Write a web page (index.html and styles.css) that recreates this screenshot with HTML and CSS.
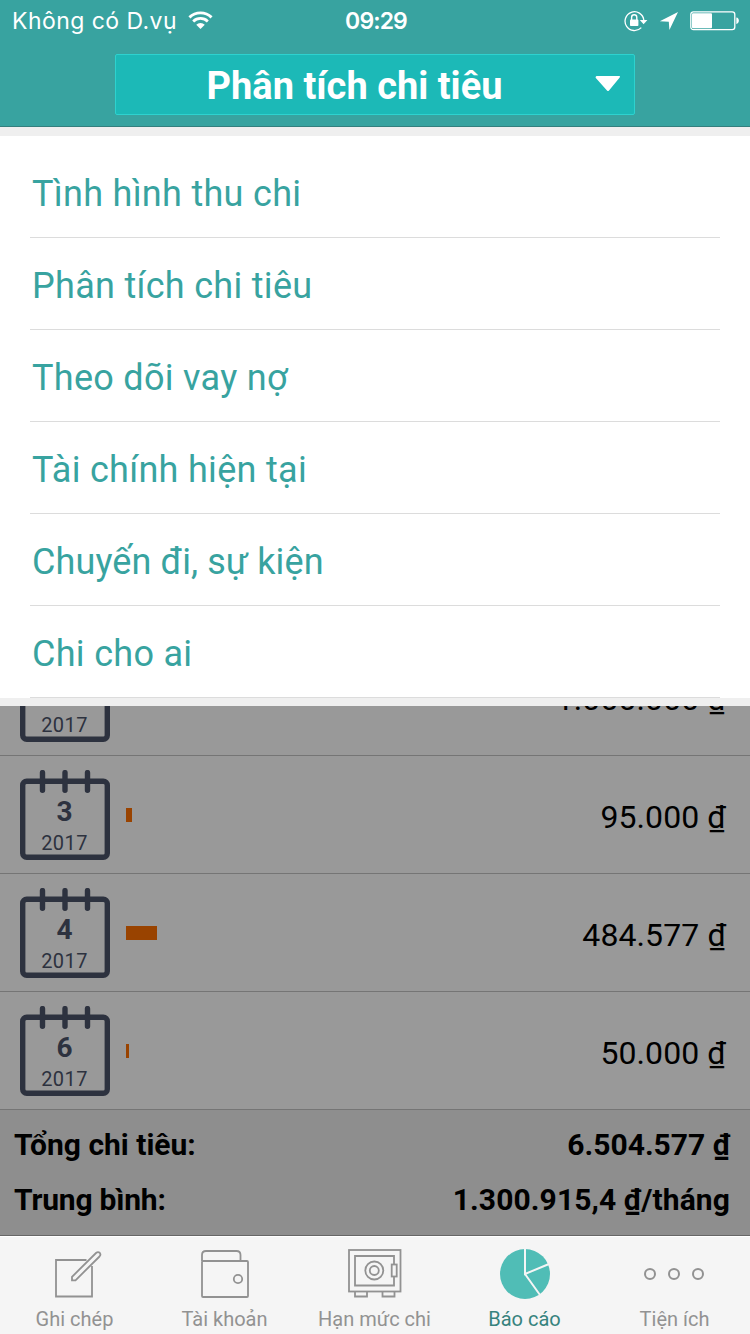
FILE: index.html
```
<!DOCTYPE html>
<html lang="vi">
<head>
    <meta charset="UTF-8">
    <meta name="viewport" content="width=device-width, initial-scale=1.0">
    <title>Phân tích chi tiêu</title>
    <link rel="stylesheet" href="styles.css">
</head>
<body>
    <!-- Header -->
    <header>
        <div class="status-bar">
            <div class="carrier">
                <span class="carrier-name">Không có D.vụ</span>
                <svg class="wifi" width="25" height="20" viewBox="0 0 26 20">
                    <path d="M1.5 6.2a16.5 16.5 0 0 1 23 0" fill="none" stroke="#fff" stroke-width="3"/>
                    <path d="M5.4 10.4a11 11 0 0 1 15.2 0" fill="none" stroke="#fff" stroke-width="2.9"/>
                    <path d="M8.6 13.8a6.4 6.4 0 0 1 8.8 0L13 18.4z" fill="#fff"/>
                </svg>
            </div>
            <span class="time">09:29</span>
            <div class="status-icons">
                <svg width="24" height="22" viewBox="0 0 24 22">
                    <path d="M17.3 17.6A9.4 9.4 0 1 1 19.8 10" fill="none" stroke="#fff" stroke-width="1.3"/>
                    <path d="M15.8 10h7.6l-3.8 4.2z" fill="#fff"/>
                    <rect x="6" y="9.6" width="8.4" height="6.4" rx=".8" fill="#fff"/>
                    <path d="M7.6 10V7.4a2.6 2.6 0 0 1 5.2 0V10" fill="none" stroke="#fff" stroke-width="1.4"/>
                </svg>
                <svg width="20" height="20" viewBox="0 0 20 20">
                    <path d="M19 1L.8 10.2l9 .6.6 8.2z" fill="#fff"/>
                </svg>
                <svg width="50" height="20" viewBox="0 0 50 20">
                    <rect x=".8" y=".8" width="44" height="17.8" rx="2.6" fill="none" stroke="#fff" stroke-width="1.3"/>
                    <rect x="2" y="2.2" width="20" height="15" rx="1" fill="#fff"/>
                    <path d="M46.3 6.6c3.4.4 3.4 6 0 6.4z" fill="#fff"/>
                </svg>
            </div>
        </div>
        <button class="report-select">
            <span>Phân tích chi tiêu</span>
            <svg class="arrow" width="26" height="16" viewBox="0 0 26 16">
                <path d="M1.5 0h23q1.2.6 0 1.8L14 14.4q-1 1.2-2 0L.6 1.8Q.4.4 1.5 0z" fill="#fff"/>
            </svg>
        </button>
    </header>

    <main>
        <!-- Report -->
        <section class="report">
            <div class="row">
                <div class="calendar">
                    <svg width="90" height="90" viewBox="0 0 90 90"><use href="#calendarFrame"/></svg>
                    <b>2</b>
                    <span>2017</span>
                </div>
                <span class="amount">1.000.000 ₫</span>
            </div>
            <div class="row">
                <div class="calendar">
                    <svg width="90" height="90" viewBox="0 0 90 90">
                        <g id="calendarFrame" fill="none" stroke="#2d323f">
                            <rect x="2.7" y="11.2" width="84.6" height="76.1" rx="4" stroke-width="5.4"/>
                            <path d="M22.5 2.6v17.6M45 2.6v17.6M67.5 2.6v17.6" stroke-width="5.4" stroke-linecap="round"/>
                        </g>
                    </svg>
                    <b>3</b>
                    <span>2017</span>
                </div>
                <div class="bar" style="width: 6px"></div>
                <span class="amount">95.000 ₫</span>
            </div>
            <div class="row">
                <div class="calendar">
                    <svg width="90" height="90" viewBox="0 0 90 90"><use href="#calendarFrame"/></svg>
                    <b>4</b>
                    <span>2017</span>
                </div>
                <div class="bar" style="width: 31px"></div>
                <span class="amount">484.577 ₫</span>
            </div>
            <div class="row">
                <div class="calendar">
                    <svg width="90" height="90" viewBox="0 0 90 90"><use href="#calendarFrame"/></svg>
                    <b>6</b>
                    <span>2017</span>
                </div>
                <div class="bar" style="width: 3px"></div>
                <span class="amount">50.000 ₫</span>
            </div>
            <div class="summary">
                <div class="summary-line"><span>Tổng chi tiêu:</span><span>6.504.577 ₫</span></div>
                <div class="summary-line"><span class="label-average">Trung bình:</span><span class="average">1.300.915,4 ₫/tháng</span></div>
            </div>
        </section>

        <!-- Dropdown menu -->
        <nav class="menu">
            <ul>
                <li>Tình hình thu chi</li>
                <li>Phân tích chi tiêu</li>
                <li>Theo dõi vay nợ</li>
                <li>Tài chính hiện tại</li>
                <li class="narrow">Chuyến đi, sự kiện</li>
                <li>Chi cho ai</li>
            </ul>
        </nav>
    </main>

    <!-- Tab bar -->
    <footer>
        <a class="tab">
            <svg width="60" height="56" viewBox="0 0 60 56" fill="none" stroke="#929292" stroke-width="1.8">
                <path d="M41.500 13H11v36.500h36V19"/>
                <path d="M27 33.300v-3.500L51 6q2-1.600 3.700-.2 1.500 1.900-.2 3.700L30.500 33.300z"/>
            </svg>
            <span>Ghi chép</span>
        </a>
        <a class="tab">
            <svg width="60" height="56" viewBox="0 0 60 56" fill="none" stroke="#929292" stroke-width="1.8">
                <path d="M7 14V8q0-4 4-4h30.500q4 0 4 4v6"/>
                <rect x="7" y="14" width="46" height="36" rx="1"/>
                <circle cx="43" cy="32" r="4.200"/>
            </svg>
            <span>Tài khoản</span>
        </a>
        <a class="tab">
            <svg width="60" height="56" viewBox="0 0 60 56" fill="none" stroke="#929292" stroke-width="1.8">
                <rect x="4" y="3" width="51.500" height="41.500"/>
                <path d="M49 17V9H10v29.500h39V30"/>
                <rect x="46.700" y="17.500" width="5" height="12"/>
                <circle cx="29.300" cy="23.500" r="9"/>
                <circle cx="29.300" cy="23.500" r="4.500"/>
                <path d="M10 44.500v5h12v-5M37.500 44.500v5h12v-5"/>
            </svg>
            <span>Hạn mức chi</span>
        </a>
        <a class="tab active">
            <svg width="60" height="56" viewBox="0 0 60 56">
                <circle cx="30" cy="27" r="25" fill="#50bdb6"/>
                <path d="M30 1v26l24-10M30 27l15 21" fill="none" stroke="#f5f5f5" stroke-width="2"/>
            </svg>
            <span>Báo cáo</span>
        </a>
        <a class="tab">
            <svg width="64" height="56" viewBox="0 0 64 56" fill="none" stroke="#929292" stroke-width="2">
                <circle cx="7" cy="27" r="5"/>
                <circle cx="31" cy="27" r="5"/>
                <circle cx="55" cy="27" r="5"/>
            </svg>
            <span>Tiện ích</span>
        </a>
    </footer>
</body>
</html>
```
FILE: styles.css
```
/* General Styles */
* {
    box-sizing: border-box;
}

body {
    font-family: Roboto, sans-serif;
    margin: 0;
    width: 750px;
    height: 1334px;
    display: flex;
    flex-direction: column;
    overflow: hidden;
}

svg {
    display: block;
    flex-shrink: 0;
}

/* Header */
header {
    height: 127px;
    background: #38a3a0;
    border-bottom: 1px solid #347f7e;
    color: #fff;
    display: flex;
    flex-direction: column;
    align-items: center;
}

.status-bar {
    width: 100%;
    height: 40px;
    margin-bottom: 14px;
    padding: 1px 10px 0 12px;
    display: grid;
    grid-template-columns: 1fr auto 1fr;
    align-items: center;
}

.carrier {
    display: flex;
    align-items: center;
    gap: 11px;
}

.carrier-name {
    font-family: Inter, sans-serif;
    font-size: 23px;
    line-height: 28px;
    padding-top: 1px;
    letter-spacing: 0.45px;
}

.time {
    font-family: Inter, sans-serif;
    font-size: 23px;
    font-weight: 600;
    line-height: 28px;
    letter-spacing: -0.9px;
}

.status-icons {
    display: flex;
    align-items: center;
    justify-content: flex-end;
    gap: 11px;
}

.report-select {
    position: relative;
    width: 520px;
    height: 61px;
    padding: 2px 41px 0 0;
    background: #1cb9b7;
    border: 1px solid #2dd2cf;
    border-radius: 2px;
    color: #fff;
    font-family: inherit;
    font-size: 38px;
    font-weight: 700;
}

.arrow {
    position: absolute;
    top: 21px;
    right: 13px;
}

/* Report */
main {
    position: relative;
    height: 1109px;
    border-bottom: 1px solid #666;
    background: #999;
    overflow: hidden;
}

.report {
    height: 100%;
    display: flex;
    flex-direction: column;
    justify-content: flex-end;
}

.row {
    height: 118px;
    flex-shrink: 0;
    padding: 0 24px 0 20px;
    border-bottom: 1px solid #757575;
    display: flex;
    align-items: center;
    gap: 16px;
}

.calendar {
    position: relative;
    width: 90px;
    height: 90px;
    padding: 25px 1px 0 0;
    color: #2d323f;
    text-align: center;
}

.calendar svg {
    position: absolute;
    top: 0;
    left: 0;
}

.calendar b {
    display: block;
    font-size: 28px;
    line-height: 33px;
}

.calendar span {
    display: block;
    font-size: 20px;
    line-height: 30px;
    letter-spacing: 0.4px;
}

.bar {
    height: 14px;
    background: #994300;
}

.amount {
    margin-left: auto;
    padding-top: 4px;
    font-size: 32px;
    letter-spacing: 0.1px;
}

.summary {
    height: 125px;
    flex-shrink: 0;
    padding: 7px 20px 8px 14px;
    background: #8e8e8e;
    font-size: 30px;
    font-weight: 700;
}

.summary-line {
    height: 55px;
    line-height: 55px;
    display: flex;
    justify-content: space-between;
}

.label-average {
    letter-spacing: -0.2px;
}

.average {
    letter-spacing: 0.1px;
}

/* Dropdown menu */
.menu {
    position: absolute;
    top: 0;
    left: 0;
    width: 100%;
    height: 579px;
    border-top: 9px solid #efefef;
    border-bottom: 8px solid #efefef;
    background: #fff;
}

.menu ul {
    list-style: none;
    margin: 0;
    padding: 10px 30px 0;
}

.menu li {
    height: 92px;
    padding: 4px 2px 0;
    border-bottom: 1px solid #dcdcdc;
    color: #38a3a0;
    font-size: 36px;
    line-height: 88px;
    letter-spacing: 0.3px;
}

.menu li.narrow {
    letter-spacing: 0.1px;
}

/* Tab bar */
footer {
    height: 98px;
    background: #f5f5f5;
    border-top: 1px solid #fff;
    display: flex;
}

.tab {
    flex: 1;
    padding-top: 10px;
    display: flex;
    flex-direction: column;
    align-items: center;
    color: #929292;
    font-size: 20px;
}

.tab span {
    padding-right: 1px;
    line-height: 32px;
}

.tab.active {
    color: #37837e;
}
```
